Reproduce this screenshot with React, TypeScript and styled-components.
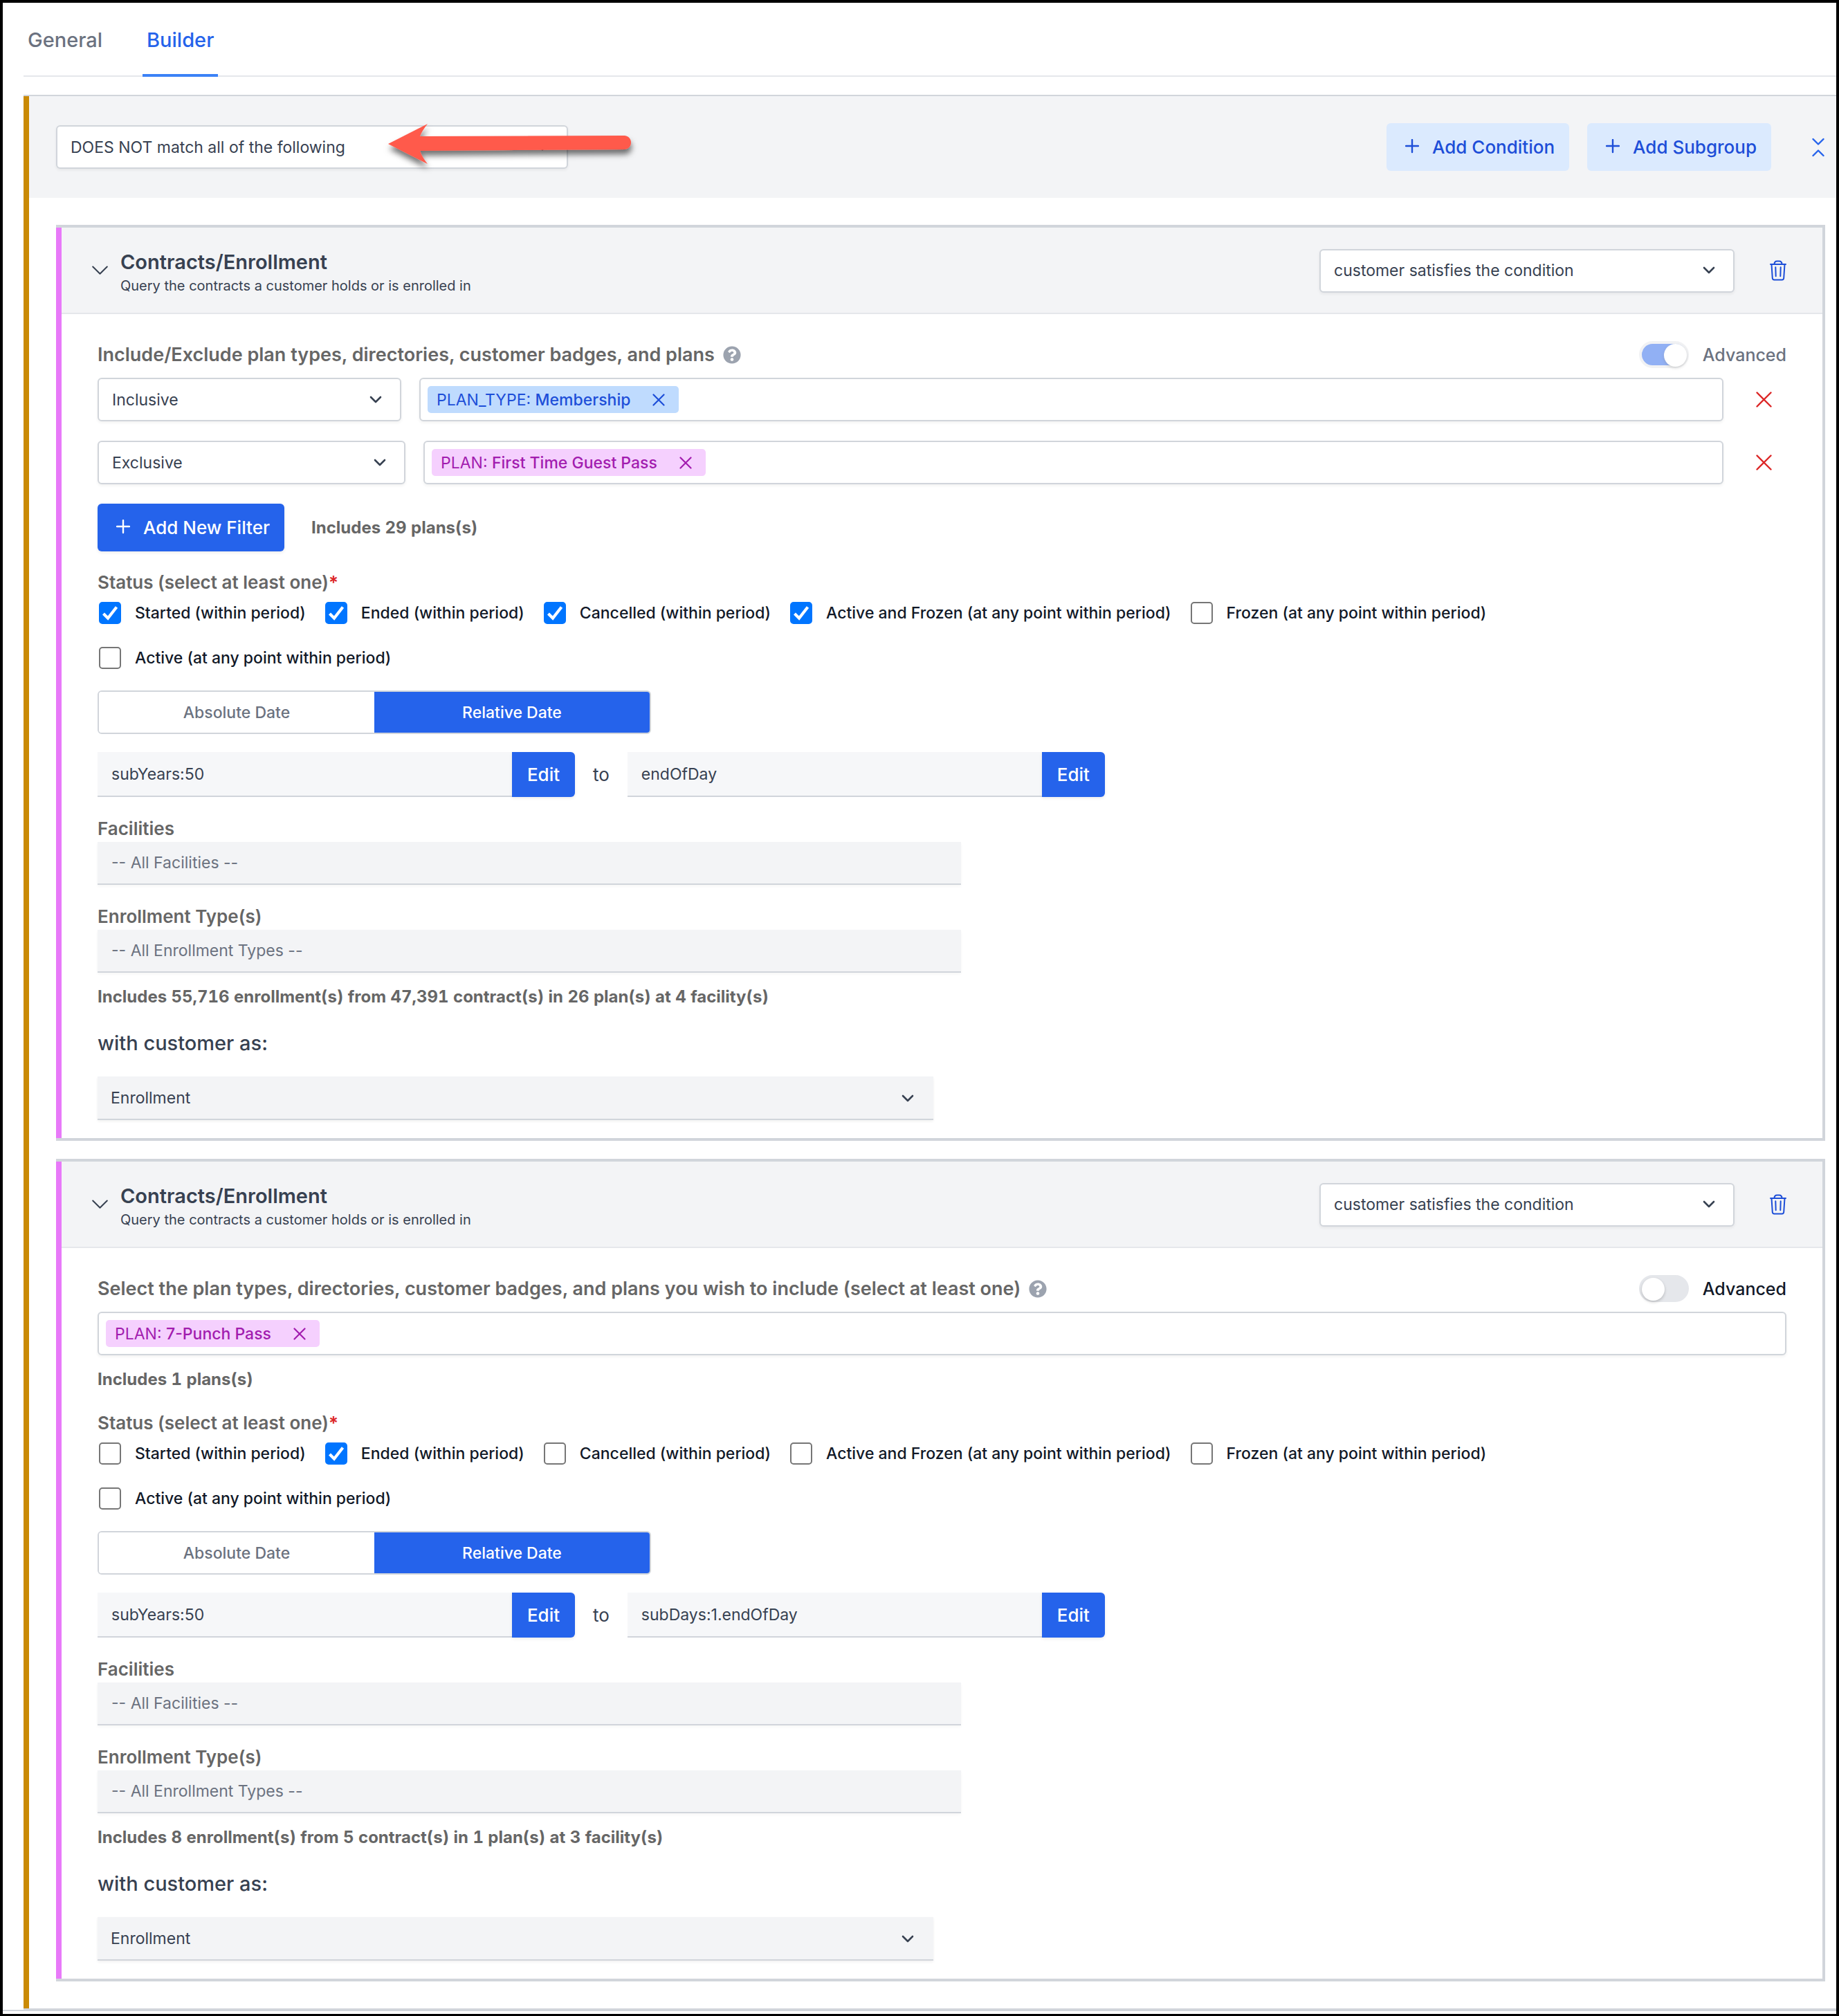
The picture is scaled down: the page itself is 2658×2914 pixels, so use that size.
import React, { useId, useState } from 'react';
import styled, { createGlobalStyle, css } from 'styled-components';
import { FaQuestionCircle } from 'react-icons/fa';

const GlobalStyle = createGlobalStyle`
  *, *::before, *::after { box-sizing: border-box; }
  body { margin: 0; background: #fff; }
  body, button, input, select {
    font-family: Inter, Roboto, "Liberation Sans", sans-serif;
  }
  button { border: 0; margin: 0; padding: 0; background: none; cursor: pointer; }
  h1, h2, h3, p { margin: 0; }
`;

/* ---------- page ---------- */

const Frame = styled.div`
  min-height: 100vh;
  border: 4px solid #000;
  padding-bottom: 4px;
  color: #374151;
  font-size: 23px;
  overflow: hidden;
`;

const Content = styled.main`
  border-bottom: 2px solid #d1d5db;
  padding: 12px 0 0 30px;
`;

const TabBar = styled.nav`
  display: flex;
  gap: 52px;
  margin-bottom: 26px;
  border-bottom: 2px solid #e5e7eb;
`;

const Tab = styled.a<{ $active?: boolean }>`
  margin-bottom: -2px;
  padding: 22px 6px 29px;
  border-bottom: 4px solid ${(p) => (p.$active ? '#3b82f6' : 'transparent')};
  color: ${(p) => (p.$active ? '#2563eb' : '#6b7280')};
  font-size: 29px;
  font-weight: 500;
  line-height: 40px;
  text-decoration: none;
`;

/* ---------- rule group ---------- */

const Group = styled.section`
  border-top: 2px solid #d1d5db;
  border-bottom: 2px solid #d1d5db;
`;

const GroupInner = styled.div`
  border-left: 8px solid #ca8a04;
`;

const GroupHeader = styled.header`
  display: flex;
  align-items: center;
  gap: 26px;
  padding: 39px 17px 39px 39px;
  background: #f3f4f6;
`;

const MatchField = styled.div`
  position: relative;
  width: 740px;
  margin-right: auto;
`;

const ArrowMark = styled.svg`
  position: absolute;
  left: 470px;
  top: -12px;
  pointer-events: none;
`;

const Rules = styled.div`
  display: flex;
  flex-direction: column;
  gap: 26px;
  padding: 39px 16px 39px 39px;
`;

const Button = styled.button<{ $tone: 'soft' | 'solid' }>`
  display: inline-flex;
  align-items: center;
  gap: 19px;
  height: 69px;
  padding: 0 21px 0 27px;
  border-radius: 6px;
  font-size: 26px;
  font-weight: 500;
  line-height: 36px;
  white-space: nowrap;
  ${(p) =>
    p.$tone === 'soft'
      ? css`
          background: #dbeafe;
          color: #1d4ed8;
        `
      : css`
          background: #2563eb;
          color: #fff;
          box-shadow: 0 2px 4px rgba(0, 0, 0, 0.08);
        `}
`;

const IconButton = styled.button<{ $color: string; $width?: number }>`
  display: inline-flex;
  align-items: center;
  justify-content: center;
  width: ${(p) => (p.$width ? `${p.$width}px` : 'auto')};
  flex: none;
  color: ${(p) => p.$color};
`;

const CollapseButton = styled(IconButton)`
  margin-left: 33px;
`;

/* ---------- select ---------- */

const SelectBox = styled.div<{ $width?: number }>`
  display: grid;
  align-items: center;
  flex: none;
  width: ${(p) => (p.$width ? `${p.$width}px` : '100%')};
  max-width: 100%;

  > * {
    grid-area: 1 / 1;
  }
  > svg {
    justify-self: end;
    margin-right: 28px;
    pointer-events: none;
  }
`;

const NativeSelect = styled.select<{ $filled?: boolean }>`
  appearance: none;
  width: 100%;
  height: 63px;
  padding: 0 60px 0 19px;
  border: 2px solid #d1d5db;
  border-radius: 6px;
  background: #fff;
  box-shadow: 0 2px 4px rgba(0, 0, 0, 0.06);
  color: #374151;
  font-size: 23px;
  ${(p) =>
    p.$filled &&
    css`
      border-width: 0 0 2px;
      border-radius: 0;
      background: #f3f4f6;
    `}
`;

/* ---------- condition card ---------- */

const Card = styled.article`
  border: solid #d1d5db;
  border-width: 4px 4px 4px 0;
`;

const CardInner = styled.div`
  border-left: 8px solid #e879f9;
`;

const CardHeader = styled.header`
  display: flex;
  align-items: center;
  padding: 25px 52px 24px 44px;
  border-bottom: 2px solid #e5e7eb;
  background: #f3f4f6;
`;

const Heading = styled.div`
  margin: 0 auto 0 18px;
  padding-top: 6px;
`;

const Title = styled.h2`
  font-size: 29px;
  font-weight: 600;
  line-height: 38px;
`;

const Subtitle = styled.p`
  font-size: 20px;
  line-height: 30px;
`;

const HeaderActions = styled.div`
  display: flex;
  align-items: center;
  gap: 51px;
`;

const CardBody = styled.div`
  padding: 39px 52px 26px;
`;

const LabelRow = styled.div`
  display: flex;
  align-items: center;
  gap: 12px;
  height: 39px;
  margin-bottom: 14px;
`;

const labelText = css`
  color: #666;
  font-size: 26px;
  font-weight: 600;
  line-height: 38px;
`;

const RowTitle = styled.h3`
  ${labelText}
  font-size: 27px;
`;

const HelpIcon = styled(FaQuestionCircle)`
  width: 26px;
  height: 26px;
  color: #9ca3af;
`;

const SwitchLabel = styled.label<{ $muted: boolean }>`
  display: flex;
  align-items: center;
  gap: 20px;
  margin-left: auto;
  color: ${(p) => (p.$muted ? '#6b7280' : '#111827')};
  font-size: 25px;
  font-weight: 500;
`;

const Switch = styled.input`
  appearance: none;
  display: flex;
  width: 72px;
  height: 39px;
  margin: 0;
  border: 4px solid #e5e7eb;
  border-radius: 20px;
  background: #e5e7eb;

  &::before {
    content: '';
    flex: none;
    width: 33px;
    height: 33px;
    border-radius: 50%;
    background: #fff;
    box-shadow: 0 2px 4px rgba(0, 0, 0, 0.2);
  }
  &:checked {
    background: #2563eb;
  }
  &:checked::before {
    margin-left: 32px;
  }
  &:disabled {
    opacity: 0.5;
  }
  &:disabled::before {
    box-shadow: 0 2px 4px rgba(0, 0, 0, 0.3);
  }
`;

const FilterRow = styled.div`
  display: flex;
  align-items: center;
  gap: 26px;
  margin-bottom: 28px;
`;

const TagBox = styled.div`
  display: flex;
  align-items: center;
  flex: 1;
  min-width: 0;
  height: 63px;
  padding: 0 10px;
  border: 2px solid #d1d5db;
  border-radius: 6px;
  background: #fff;
  box-shadow: 0 2px 4px rgba(0, 0, 0, 0.06);
`;

const TagInput = styled.input`
  flex: 1;
  min-width: 0;
  height: 40px;
  border: 0;
  outline: 0;
  background: transparent;
  font-size: 23px;
`;

const Tag = styled.span<{ $kind: 'type' | 'plan' }>`
  display: inline-flex;
  align-items: center;
  height: 39px;
  padding: 0 20px 0 13px;
  border-radius: 5px;
  background: ${(p) => (p.$kind === 'type' ? '#bfdbfe' : '#f5d0fe')};
  color: ${(p) => (p.$kind === 'type' ? '#1d4ed8' : '#a21caf')};
  font-size: 23px;
  white-space: pre;

  b {
    font-weight: 500;
  }
  button {
    margin-left: 32px;
  }
`;

const AddRow = styled.div`
  display: flex;
  align-items: center;
  gap: 39px;
`;

const Summary = styled.p<{ $spaced?: boolean }>`
  margin-top: ${(p) => (p.$spaced ? '17px' : '0')};
  color: #666;
  font-size: 24px;
  font-weight: 700;
  font-variant-numeric: tabular-nums;
  line-height: 36px;
`;

const FieldSet = styled.fieldset`
  min-width: 0;
  margin: 26px 0 0;
  padding: 0;
  border: 0;
`;

const Legend = styled.legend`
  padding: 0;
  margin-bottom: 9px;
  ${labelText}

  em {
    color: #dc2626;
    font-style: normal;
  }
`;

const CheckList = styled.div`
  display: flex;
  flex-wrap: wrap;
  gap: 33px 28px;
  padding-left: 2px;
`;

const CheckLabel = styled.label`
  display: grid;
  grid-template-columns: 32px auto;
  align-items: center;
  column-gap: 20px;
  color: #111827;
  font-size: 23px;
  font-weight: 500;
  line-height: 32px;

  > input, > svg {
    grid-area: 1 / 1;
  }
`;

const CheckInput = styled.input`
  appearance: none;
  width: 32px;
  height: 32px;
  margin: 0;
  border: 2px solid #767676;
  border-radius: 5px;
  background: #fff;

  &:checked {
    border-color: #0075ff;
    background: #0075ff;
  }
  & + svg {
    visibility: hidden;
    pointer-events: none;
  }
  &:checked + svg {
    visibility: visible;
  }
`;

const Segments = styled.div`
  display: flex;
  width: 800px;
  max-width: 100%;
  height: 63px;
  margin-top: 31px;
  overflow: hidden;
  border: 2px solid #d1d5db;
  border-radius: 6px;
`;

const Segment = styled.button<{ $active?: boolean }>`
  flex: 1;
  background: ${(p) => (p.$active ? '#2563eb' : '#fff')};
  color: ${(p) => (p.$active ? '#fff' : '#6b7280')};
  font-size: 23px;
  font-weight: 500;
`;

const RangeRow = styled.div`
  display: flex;
  align-items: center;
  gap: 26px;
  margin-top: 26px;
  font-size: 26px;
`;

const RangeField = styled.div`
  display: flex;
  width: 690px;
`;

const RangeInput = styled.input`
  flex: 1;
  min-width: 0;
  height: 65px;
  padding: 0 20px;
  border: 0;
  border-bottom: 2px solid #d1d5db;
  border-radius: 0;
  background: #f6f7f9;
  color: #374151;
  font-size: 23px;
`;

const EditButton = styled.button`
  width: 91px;
  border-radius: 0 6px 6px 0;
  background: #2563eb;
  box-shadow: 0 2px 4px rgba(0, 0, 0, 0.08);
  color: #fff;
  font-size: 26px;
  font-weight: 500;
`;

const Field = styled.div`
  display: flex;
  flex-direction: column;
  width: 1248px;
  max-width: 100%;
  margin-top: 27px;
`;

const FieldLabel = styled.label`
  ${labelText}
`;

const FilledInput = styled.input`
  width: 100%;
  height: 62px;
  padding: 0 20px;
  border: 0;
  border-bottom: 2px solid #d1d5db;
  border-radius: 0;
  background: #f3f4f6;
  box-shadow: 0 2px 4px rgba(0, 0, 0, 0.04);
  color: #374151;
  font-size: 23px;

  &::placeholder {
    color: #6b7280;
    opacity: 1;
  }
`;

const RoleLabel = styled.label`
  display: block;
  margin: 29px 0 28px;
  font-size: 29px;
  font-weight: 500;
  line-height: 40px;
`;

/* ---------- icons ---------- */

const Chevron = () => (
  <svg width="18" height="12" viewBox="0 0 18 12" fill="none" aria-hidden="true">
    <path d="M2 2l7 7 7-7" stroke="#374151" strokeWidth="2.6" strokeLinecap="round" strokeLinejoin="round" />
  </svg>
);

const ThinChevron = () => (
  <svg width="23" height="14" viewBox="0 0 23 14" fill="none" aria-hidden="true">
    <path d="M1.2 1.5l10.3 10.3L21.800 1.5" stroke="currentColor" strokeWidth="2" strokeLinecap="round" strokeLinejoin="round" />
  </svg>
);

const Plus = () => (
  <svg width="20" height="24" viewBox="0 0 20 24" fill="none" aria-hidden="true">
    <path d="M10 1v18M1 10h18" stroke="currentColor" strokeWidth="2.4" strokeLinecap="round" />
  </svg>
);

const Cross = ({ size, weight }: { size: number; weight: number }) => (
  <svg width={size} height={size} viewBox={`0 0 ${size} ${size}`} fill="none" aria-hidden="true">
    <path
      d={`M1.500 1.500L${size - 1.5} ${size - 1.5}M${size - 1.5} 1.500L1.500 ${size - 1.5}`}
      stroke="currentColor"
      strokeWidth={weight}
      strokeLinecap="round"
    />
  </svg>
);

const Trash = () => (
  <svg width="24" height="30" viewBox="0 0 24 30" fill="none" stroke="currentColor" strokeWidth="2" strokeLinecap="round" strokeLinejoin="round" aria-hidden="true">
    <path d="M1 6h22" />
    <path d="M6.500 6c0-3 1.500-4.500 4-4.500h3c2.500 0 4 1.500 4 4.500" />
    <path d="M2.500 6l1.300 20a2.500 2.500 0 0 0 2.500 2.500h11.400a2.500 2.500 0 0 0 2.500-2.500L21.500 6" />
    <path d="M8.300 10.200l.4 13M15.700 10.200l-.4 13" />
  </svg>
);

const Collapse = () => (
  <svg width="18" height="28" viewBox="0 0 18 28" fill="none" stroke="currentColor" strokeWidth="2.4" strokeLinecap="round" strokeLinejoin="round" aria-hidden="true">
    <path d="M1.500 2L9 9.500 16.500 2M1.500 26L9 18.500 16.500 26" />
  </svg>
);

const Tick = () => (
  <svg width="32" height="32" viewBox="0 0 32 32" fill="none" aria-hidden="true">
    <path d="M6.500 17l6.500 6.500L25.500 7.500" stroke="#fff" strokeWidth="4.200" />
  </svg>
);

const Arrow = () => (
  <ArrowMark width="380" height="90" viewBox="0 0 380 90" aria-hidden="true">
    <defs>
      <filter id="arrow-shadow" x="-5%" y="-20%" width="112%" height="160%">
        <feDropShadow dx="1" dy="7" stdDeviation="4" floodColor="#000" floodOpacity="0.55" />
      </filter>
    </defs>
    <path
      d="M10 39L67 10Q59 20 56 28L352 27C358 28 361 32 361 37S358 46 352 47L56 49Q59 58 67 68Z"
      fill="#ff5a4c"
      filter="url(#arrow-shadow)"
    />
  </ArrowMark>
);

/* ---------- parts ---------- */

type SelectProps = { value: string; label?: string; id?: string; width?: number; filled?: boolean };

const Select = ({ value, label, id, width, filled }: SelectProps) => (
  <SelectBox $width={width}>
    <NativeSelect id={id} aria-label={label} defaultValue={value} $filled={filled}>
      <option>{value}</option>
    </NativeSelect>
    <Chevron />
  </SelectBox>
);

type TagData = { kind: 'type' | 'plan'; prefix: string; name: string };

const Tags = ({ tag }: { tag: TagData }) => (
  <TagBox>
    <Tag $kind={tag.kind}>
      {tag.prefix}: <b>{tag.name}</b>
      <IconButton $color="inherit" aria-label={`Remove ${tag.name}`}>
        <Cross size={18} weight={2.2} />
      </IconButton>
    </Tag>
    <TagInput aria-label="Add a plan" />
  </TagBox>
);

const statuses = [
  'Started (within period)',
  'Ended (within period)',
  'Cancelled (within period)',
  'Active and Frozen (at any point within period)',
  'Frozen (at any point within period)',
  'Active (at any point within period)',
];

type Filter = { mode: string; width: number; tag: TagData };

type Condition = {
  label: string;
  advanced: boolean;
  filters?: Filter[];
  tag?: TagData;
  plans: string;
  checked: number[];
  from: string;
  to: string;
  summary: string;
};

const conditions: Condition[] = [
  {
    label: 'Include/Exclude plan types, directories, customer badges, and plans',
    advanced: true,
    filters: [
      { mode: 'Inclusive', width: 439, tag: { kind: 'type', prefix: 'PLAN_TYPE', name: 'Membership' } },
      { mode: 'Exclusive', width: 445, tag: { kind: 'plan', prefix: 'PLAN', name: 'First Time Guest Pass' } },
    ],
    plans: 'Includes 29 plans(s)',
    checked: [0, 1, 2, 3],
    from: 'subYears:50',
    to: 'endOfDay',
    summary: 'Includes 55,716 enrollment(s) from 47,391 contract(s) in 26 plan(s) at 4 facility(s)',
  },
  {
    label: 'Select the plan types, directories, customer badges, and plans you wish to include (select at least one)',
    advanced: false,
    tag: { kind: 'plan', prefix: 'PLAN', name: '7-Punch Pass' },
    plans: 'Includes 1 plans(s)',
    checked: [1],
    from: 'subYears:50',
    to: 'subDays:1.endOfDay',
    summary: 'Includes 8 enrollment(s) from 5 contract(s) in 1 plan(s) at 3 facility(s)',
  },
];

const ConditionCard = ({ data }: { data: Condition }) => {
  const id = useId();
  const [relative, setRelative] = useState(true);

  return (
    <Card>
      <CardInner>
        <CardHeader>
          <IconButton $color="#374151" aria-label="Collapse condition">
            <ThinChevron />
          </IconButton>
          <Heading>
            <Title>Contracts/Enrollment</Title>
            <Subtitle>Query the contracts a customer holds or is enrolled in</Subtitle>
          </Heading>
          <HeaderActions>
            <Select value="customer satisfies the condition" label="Condition mode" width={600} />
            <IconButton $color="#1d4ed8" aria-label="Delete condition">
              <Trash />
            </IconButton>
          </HeaderActions>
        </CardHeader>

        <CardBody>
          <LabelRow>
            <RowTitle>{data.label}</RowTitle>
            <HelpIcon aria-hidden="true" />
            <SwitchLabel $muted={data.advanced}>
              <Switch type="checkbox" role="switch" defaultChecked={data.advanced} disabled={data.advanced} />
              Advanced
            </SwitchLabel>
          </LabelRow>

          {data.filters?.map((f) => (
            <FilterRow key={f.mode}>
              <Select value={f.mode} label="Filter mode" width={f.width} />
              <Tags tag={f.tag} />
              <IconButton $color="#dc2626" $width={65} aria-label={`Remove ${f.mode} filter`}>
                <Cross size={23} weight={2.4} />
              </IconButton>
            </FilterRow>
          ))}
          {data.filters && (
            <AddRow>
              <Button $tone="solid">
                <Plus />
                Add New Filter
              </Button>
              <Summary>{data.plans}</Summary>
            </AddRow>
          )}
          {data.tag && <Tags tag={data.tag} />}
          {data.tag && <Summary $spaced>{data.plans}</Summary>}

          <FieldSet>
            <Legend>
              Status (select at least one)<em>*</em>
            </Legend>
            <CheckList>
              {statuses.map((s, i) => (
                <CheckLabel key={s}>
                  <CheckInput type="checkbox" defaultChecked={data.checked.includes(i)} />
                  <Tick />
                  <span>{s}</span>
                </CheckLabel>
              ))}
            </CheckList>
          </FieldSet>

          <Segments>
            <Segment $active={!relative} onClick={() => setRelative(false)}>
              Absolute Date
            </Segment>
            <Segment $active={relative} onClick={() => setRelative(true)}>
              Relative Date
            </Segment>
          </Segments>

          <RangeRow>
            <RangeField>
              <RangeInput aria-label="From" readOnly value={data.from} />
              <EditButton>Edit</EditButton>
            </RangeField>
            <span>to</span>
            <RangeField>
              <RangeInput aria-label="To" readOnly value={data.to} />
              <EditButton>Edit</EditButton>
            </RangeField>
          </RangeRow>

          <Field>
            <FieldLabel htmlFor={`${id}-fac`}>Facilities</FieldLabel>
            <FilledInput id={`${id}-fac`} placeholder="-- All Facilities --" />
          </Field>
          <Field>
            <FieldLabel htmlFor={`${id}-type`}>Enrollment Type(s)</FieldLabel>
            <FilledInput id={`${id}-type`} placeholder="-- All Enrollment Types --" />
          </Field>
          <Summary $spaced>{data.summary}</Summary>

          <RoleLabel htmlFor={`${id}-role`}>with customer as:</RoleLabel>
          <Select id={`${id}-role`} value="Enrollment" width={1208} filled />
        </CardBody>
      </CardInner>
    </Card>
  );
};

export default function App() {
  return (
    <Frame>
      <GlobalStyle />
      <Content>
        <TabBar>
          <Tab href="#general">General</Tab>
          <Tab href="#builder" $active aria-current="page">
            Builder
          </Tab>
        </TabBar>

        <Group>
          <GroupInner>
            <GroupHeader>
              <MatchField>
                <Select value="DOES NOT match all of the following" label="Group match mode" />
                <Arrow />
              </MatchField>
              <Button $tone="soft">
                <Plus />
                Add Condition
              </Button>
              <Button $tone="soft">
                <Plus />
                Add Subgroup
              </Button>
              <CollapseButton $color="#2563eb" aria-label="Collapse all">
                <Collapse />
              </CollapseButton>
            </GroupHeader>
            <Rules>
              {conditions.map((c) => (
                <ConditionCard key={c.label} data={c} />
              ))}
            </Rules>
          </GroupInner>
        </Group>
      </Content>
    </Frame>
  );
}
